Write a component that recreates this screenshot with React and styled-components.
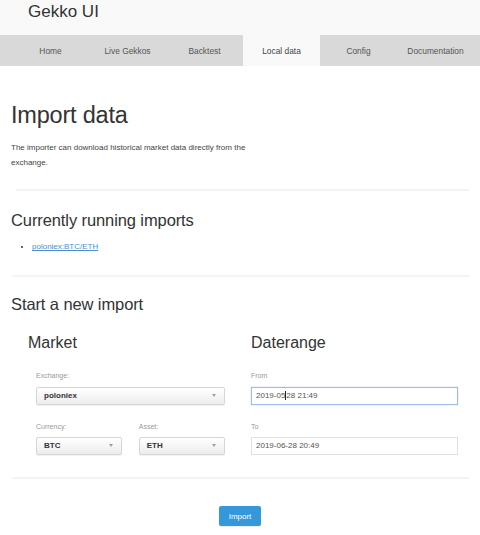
import React from "react";
import styled, { createGlobalStyle } from "styled-components";

const GlobalStyle = createGlobalStyle`
  html, body {
    margin: 0;
    padding: 0;
    background: #ffffff;
    font-family: "Liberation Sans", Arial, Helvetica, sans-serif;
    color: #333;
  }
  * { box-sizing: border-box; }
`;

const Page = styled.div`
  width: 480px;
  min-height: 535px;
  background: #ffffff;
`;

const Header = styled.header`
  height: 35px;
  background: #f9f9f9;
  padding-left: 28px;
`;

const Brand = styled.div`
  font-size: 17px;
  line-height: 23px;
  color: #333;
`;

const NavBar = styled.nav`
  height: 31px;
  background: #d9d9d9;
  display: flex;
  padding-left: 12px;
`;

const Tab = styled.a`
  width: 77px;
  height: 31px;
  line-height: 32px;
  text-align: center;
  font-size: 8.4px;
  color: ${(p) => (p.$active ? "#444" : "#555")};
  background: ${(p) => (p.$active ? "#f9f9f9" : "transparent")};
  text-decoration: none;
`;

const Main = styled.main`
  width: 458px;
  margin-left: 11px;
  padding-top: 35px;
`;

const Title = styled.h1`
  margin: 0;
  font-size: 23.5px;
  line-height: 28px;
  font-weight: normal;
  color: #333;
  letter-spacing: -0.2px;
`;

const Lead = styled.p`
  margin: 12px 0 0;
  max-width: 270px;
  font-size: 8px;
  line-height: 14.5px;
  color: #444;
`;

const Rule = styled.div`
  height: 2px;
  margin: ${(p) => p.$margin};
  margin-left: ${(p) => p.$inset || 1}px;
  background: #f4f4f4;
`;

const SectionTitle = styled.h2`
  margin: ${(p) => p.$top}px 0 0;
  font-size: 16.5px;
  line-height: 20px;
  font-weight: normal;
  color: #333;
  letter-spacing: -0.1px;
`;

const ImportList = styled.ul`
  margin: 11px 0 0;
  padding-left: 21px;
  font-size: 8px;
  line-height: 12px;
  color: #333;
  list-style: disc;
`;

const ImportLink = styled.a`
  color: #4a8fd0;
  text-decoration: underline;
`;

const FormGrid = styled.div`
  display: grid;
  grid-template-columns: 223px 207px;
  padding-left: 17px;
  margin-top: 18.5px;
`;

const Column = styled.div`
  display: flex;
  flex-direction: column;
`;

const ColumnTitle = styled.h3`
  margin: 0;
  font-size: 16px;
  line-height: 20px;
  font-weight: normal;
  color: #333;
`;

const Fields = styled.div`
  display: flex;
  flex-direction: column;
  padding-left: ${(p) => p.$inset || 0}px;
  width: ${(p) => p.$width}px;
  box-sizing: content-box;
  margin-top: 18.5px;
`;

const FieldRow = styled.div`
  display: flex;
  gap: 16.5px;
  margin-top: ${(p) => p.$top || 0}px;
`;

const Field = styled.div`
  display: flex;
  flex-direction: column;
  flex: 1;
  margin-top: ${(p) => p.$top || 0}px;
`;

const Label = styled.label`
  font-size: 7px;
  line-height: 10px;
  color: #999;
  margin-bottom: 5.3px;
`;

const SelectBox = styled.div`
  height: 18px;
  display: flex;
  align-items: center;
  justify-content: space-between;
  padding: 0 8px 0 7px;
  border: 1px solid #d6d6d6;
  border-radius: 2px;
  background: linear-gradient(#ffffff, #ededed);
  box-shadow: 0 1px 1px rgba(0, 0, 0, 0.06);
  font-size: 8px;
  font-weight: bold;
  color: #333;
`;

const Arrow = styled.span`
  width: 0;
  height: 0;
  border-left: 2.5px solid transparent;
  border-right: 2.5px solid transparent;
  border-top: 3px solid #a0a0a0;
`;

const DateInput = styled.div`
  height: 18px;
  display: flex;
  align-items: center;
  padding-left: 4px;
  border: 1px solid ${(p) => (p.$focused ? "#9dbbe3" : "#e0e0e0")};
  box-shadow: ${(p) =>
    p.$focused ? "0 0 1px rgba(80, 140, 220, 0.5)" : "none"};
  background: #fff;
  font-size: 8px;
  color: #555;
`;

const Caret = styled.span`
  display: inline-block;
  width: 1px;
  height: 9px;
  background: #222;
  vertical-align: middle;
`;

const ButtonRow = styled.div`
  display: flex;
  justify-content: center;
  margin-top: 27px;
  padding-bottom: 9px;
`;

const Button = styled.button`
  width: 42px;
  height: 20.5px;
  border: none;
  border-radius: 2px;
  background: #3498db;
  color: #fff;
  font-family: "Liberation Sans", Arial, sans-serif;
  font-size: 8px;
  padding: 0;
  box-shadow: 0 1px 1px rgba(0, 0, 0, 0.08);
`;

const tabs = ["Home", "Live Gekkos", "Backtest", "Local data", "Config", "Documentation"];

function Select({ value }) {
  return (
    <SelectBox>
      <span>{value}</span>
      <Arrow />
    </SelectBox>
  );
}

export default function App() {
  return (
    <Page>
      <GlobalStyle />
      <Header>
        <Brand>Gekko UI</Brand>
      </Header>
      <NavBar>
        {tabs.map((t) => (
          <Tab key={t} $active={t === "Local data"}>
            {t}
          </Tab>
        ))}
      </NavBar>
      <Main>
        <Title>Import data</Title>
        <Lead>
          The importer can download historical market data directly from the exchange.
        </Lead>
        <Rule $margin="19px 0 0" $inset={5} />
        <SectionTitle $top={19.3}>Currently running imports</SectionTitle>
        <ImportList>
          <li>
            <ImportLink href="#">poloniex:BTC/ETH</ImportLink>
          </li>
        </ImportList>
        <Rule $margin="21.8px 0 0" />
        <SectionTitle $top={17.3}>Start a new import</SectionTitle>
        <FormGrid>
          <Column>
            <ColumnTitle>Market</ColumnTitle>
            <Fields $inset={8} $width={189}>
              <Field>
                <Label>Exchange:</Label>
                <Select value="poloniex" />
              </Field>
              <FieldRow $top={17}>
                <Field>
                  <Label>Currency:</Label>
                  <Select value="BTC" />
                </Field>
                <Field>
                  <Label>Asset:</Label>
                  <Select value="ETH" />
                </Field>
              </FieldRow>
            </Fields>
          </Column>
          <Column>
            <ColumnTitle>Daterange</ColumnTitle>
            <Fields $width={207}>
              <Field>
                <Label>From</Label>
                <DateInput $focused>
                  2019-05<Caret />28 21:49
                </DateInput>
              </Field>
              <Field $top={17}>
                <Label>To</Label>
                <DateInput>2019-06-28 20:49</DateInput>
              </Field>
            </Fields>
          </Column>
        </FormGrid>
        <Rule $margin="22px 0 0" />
        <ButtonRow>
          <Button>Import</Button>
        </ButtonRow>
      </Main>
    </Page>
  );
}
